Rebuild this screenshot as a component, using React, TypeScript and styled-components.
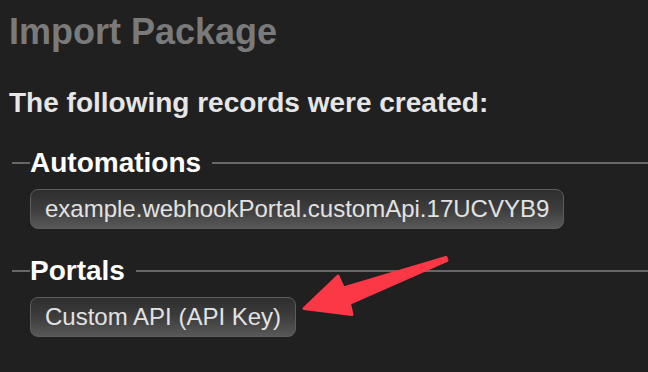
import * as React from "react";
import styled, { createGlobalStyle } from "styled-components";

const GlobalStyle = createGlobalStyle`
    html, body {
        margin: 0;
        padding: 0;
        background: #202020;
    }
    body {
        font-family: "Liberation Sans", Arial, Helvetica, sans-serif;
        width: 648px;
        height: 372px;
        overflow: hidden;
    }
`;

const Page = styled.div`
    position: relative;
    width: 648px;
    height: 372px;
    padding: 12px 0 0 9px;
    box-sizing: border-box;
`;

const Title = styled.h1`
    margin: 0;
    font-size: 36px;
    line-height: 40px;
    font-weight: 700;
    color: #7a7a7a;
`;

const Subtitle = styled.h2`
    margin: 35px 0 0 0;
    font-size: 28px;
    line-height: 32px;
    font-weight: 700;
    color: #e6e6e6;
`;

const Section = styled.section<{gap:number}>`
    margin-top: ${props => props.gap}px;
    margin-left: 3px;
`;

const LegendRow = styled.div`
    display: flex;
    align-items: center;
    margin-right: -9px;
`;

const Rule = styled.span<{grow?:boolean}>`
    height: 2px;
    background: #676767;
    width: ${props => props.grow ? "auto" : "18px"};
    flex: ${props => props.grow ? "1" : "none"};
`;

const Legend = styled.span`
    font-size: 28px;
    line-height: 32px;
    font-weight: 700;
    color: #ffffff;
    padding: 0 11px 0 0;
`;

const Pill = styled.div`
    display: inline-block;
    margin: 10px 0 0 18px;
    height: 40px;
    box-sizing: border-box;
    padding: 0 14px;
    border: 1px solid #5c5c5c;
    border-radius: 8px;
    background: linear-gradient(to bottom, #2e2e2e 0%, #3d3d3d 50%, #585858 100%);
    font-size: 24px;
    line-height: 38px;
    color: #e2e2e2;
    white-space: nowrap;
`;

const ArrowLayer = styled.svg`
    position: absolute;
    left: 0;
    top: 0;
    pointer-events: none;
`;

const records = [
    { name: "Automations", items: ["example.webhookPortal.customApi.17UCVYB9"], gap: 28 },
    { name: "Portals", items: ["Custom API (API Key)"], gap: 26 },
];

export default function App() {
    return (
        <Page>
            <GlobalStyle />
            <Title>Import Package</Title>
            <Subtitle>The following records were created:</Subtitle>
            {records.map((r) => (
                <Section key={r.name} gap={r.gap}>
                    <LegendRow>
                        <Rule />
                        <Legend>{r.name}</Legend>
                        <Rule grow />
                    </LegendRow>
                    {r.items.map((it) => (
                        <Pill key={it}>{it}</Pill>
                    ))}
                </Section>
            ))}
            <ArrowLayer width="648" height="372" viewBox="0 0 648 372">
                <polygon
                    points="304,308.5 338,276 343.5,288 446,257.5 447,260.5 349.5,303.5 352,314.5"
                    fill="#fc3746"
                    stroke="#fc3746"
                    strokeWidth="3"
                    strokeLinejoin="round"
                />
            </ArrowLayer>
        </Page>
    );
}
